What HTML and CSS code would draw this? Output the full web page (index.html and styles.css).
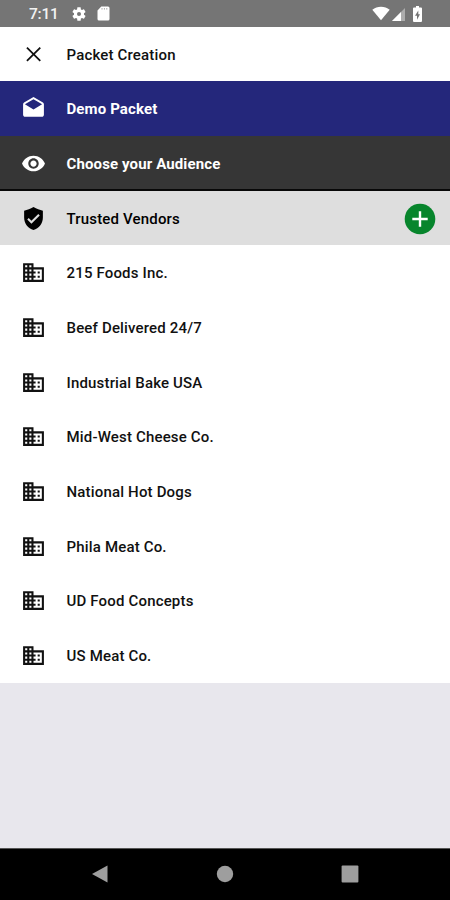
FILE: index.html
```html
<!DOCTYPE html>
<html lang="en">
<head>
<meta charset="utf-8">
<title>Packet Creation</title>
<link rel="stylesheet" href="styles.css">
</head>
<body>
<svg class="defs" aria-hidden="true">
  <symbol id="business" viewBox="0 0 24 24"><path d="M12 7V3H2v18h20V7H12zM6 19H4v-2h2v2zm0-4H4v-2h2v2zm0-4H4V9h2v2zm0-4H4V5h2v2zm4 12H8v-2h2v2zm0-4H8v-2h2v2zm0-4H8V9h2v2zm0-4H8V5h2v2zm10 12h-8v-2h2v-2h-2v-2h2v-2h-2V9h8v10zm-2-8h-2v2h2v-2zm0 4h-2v2h2v-2z"/></symbol>
</svg>
<div class="screen">
  <header class="status">
    <span class="time">7:11</span>
    <svg class="gear" viewBox="0 0 24 24"><path d="M19.43 12.98c.04-.32.07-.64.07-.98s-.03-.66-.07-.98l2.11-1.65c.19-.15.24-.42.12-.64l-2-3.46c-.12-.22-.39-.3-.61-.22l-2.49 1c-.52-.4-1.08-.73-1.69-.98l-.38-2.65C14.46 2.18 14.25 2 14 2h-4c-.25 0-.46.18-.49.42l-.38 2.65c-.61.25-1.17.59-1.69.98l-2.49-1c-.23-.09-.49 0-.61.22l-2 3.46c-.13.22-.07.49.12.64l2.11 1.65c-.04.32-.07.65-.07.98s.03.66.07.98l-2.11 1.65c-.19.15-.24.42-.12.64l2 3.46c.12.22.39.3.61.22l2.49-1c.52.4 1.08.73 1.69.98l.38 2.65c.03.24.24.42.49.42h4c.25 0 .46-.18.49-.42l.38-2.65c.61-.25 1.17-.59 1.69-.98l2.49 1c.23.09.49 0 .61-.22l2-3.46c.12-.22.07-.49-.12-.64l-2.11-1.65zM12 15a3 3 0 1 1 0-6 3 3 0 0 1 0 6z"/></svg>
    <svg class="card" viewBox="0 0 13 15"><path d="M4.3.5H11a1.5 1.5 0 0 1 1.5 1.5v11a1.5 1.5 0 0 1-1.5 1.5H2A1.5 1.5 0 0 1 .5 13V4.5z"/><path class="slots" d="M5 2v1.6M7.4 2v1.6M9.8 2v1.6"/></svg>
    <span class="spacer"></span>
    <svg class="wifi" viewBox="0 0 18 14"><path d="M9 13.7.3 3.3C2.8 1.3 5.8.3 9 .3s6.2 1 8.7 3z"/></svg>
    <svg class="signal" viewBox="0 0 13 13"><path class="dim" d="M13 0v13H0z"/><path d="M9 4v9H0z"/></svg>
    <svg class="battery" viewBox="0 0 9 16"><path fill-rule="evenodd" d="M3 0h3v1.6h2q1 0 1 1V15q0 1-1 1H1q-1 0-1-1V2.600q0-1 1-1h2zM5.300 4.500 2 9.700h2v4L7 8.300H5.300z"/></svg>
  </header>
  <main>
    <div class="row title"><svg class="icon close" viewBox="0 0 24 24"><path d="m5.700 5.400 12.800 12.800M18.500 5.400 5.700 18.200"/></svg><span class="label">Packet Creation</span></div>
    <div class="row packet"><svg class="icon" viewBox="0 0 24 24"><path d="M21.990 8c0-.72-.37-1.350-.94-1.700L12 1 2.950 6.300C2.380 6.650 2 7.280 2 8v10c0 1.100.9 2 2 2h16c1.100 0 2-.9 2-2l-.01-10zM12 13 3.740 7.840 12 3l8.260 4.840L12 13z"/></svg><span class="label">Demo Packet</span></div>
    <div class="row audience"><svg class="icon" viewBox="0 0 24 24"><path d="M12 4.500C7 4.500 2.730 7.610 1 12c1.730 4.390 6 7.500 11 7.500s9.270-3.110 11-7.500c-1.730-4.390-6-7.500-11-7.500zM12 17c-2.760 0-5-2.240-5-5s2.240-5 5-5 5 2.240 5 5-2.240 5-5 5zm0-8c-1.660 0-3 1.340-3 3s1.340 3 3 3 3-1.340 3-3-1.340-3-3-3z"/></svg><span class="label">Choose your Audience</span></div>
    <div class="row trusted"><svg class="icon" viewBox="0 0 24 24"><path d="M12 1C9 2.700 6 3.900 3 4.500V11c0 5.550 3.840 10.740 9 12 5.160-1.260 9-6.450 9-12V4.500C18 3.900 15 2.700 12 1zm-2 16-4-4 1.410-1.410L10 14.170l6.590-6.590L18 9l-8 8z"/></svg><span class="label">Trusted Vendors</span><svg class="add" viewBox="0 0 32 32"><circle cx="16" cy="16" r="15.300"/><path d="M16 8.300v15.400M8.300 16h15.400"/></svg></div>
    <div class="row"><svg class="icon"><use href="#business"/></svg><span class="label">215 Foods Inc.</span></div>
    <div class="row"><svg class="icon"><use href="#business"/></svg><span class="label">Beef Delivered 24/7</span></div>
    <div class="row"><svg class="icon"><use href="#business"/></svg><span class="label">Industrial Bake USA</span></div>
    <div class="row"><svg class="icon"><use href="#business"/></svg><span class="label">Mid-West Cheese Co.</span></div>
    <div class="row"><svg class="icon"><use href="#business"/></svg><span class="label">National Hot Dogs</span></div>
    <div class="row"><svg class="icon"><use href="#business"/></svg><span class="label">Phila Meat Co.</span></div>
    <div class="row"><svg class="icon"><use href="#business"/></svg><span class="label">UD Food Concepts</span></div>
    <div class="row"><svg class="icon"><use href="#business"/></svg><span class="label">US Meat Co.</span></div>
  </main>
  <nav class="nav">
    <svg viewBox="0 0 18 18"><path d="M16.500.5v17L1 9z"/></svg>
    <svg viewBox="0 0 18 18"><circle cx="9" cy="9" r="8.200"/></svg>
    <svg viewBox="0 0 18 18"><rect x=".6" y=".6" width="16.800" height="16.800" rx="1"/></svg>
  </nav>
</div>
</body>
</html>
```
FILE: styles.css
```css
* { box-sizing: border-box; }
body { margin: 0; font-family: Roboto, "Liberation Sans", sans-serif; }
svg { display: block; flex: none; fill: currentColor; }
.defs { width: 0; height: 0; position: absolute; }
.screen {
  display: flex;
  flex-direction: column;
  width: 450px;
  height: 900px;
  background: #e8e7ed;
}
.status {
  display: flex;
  align-items: center;
  height: 26.7px;
  padding: 1px 28px 0 29px;
  background: #757575;
  color: #fff;
}
.time { width: 42px; font-size: 15.5px; font-weight: 500; line-height: 24px; padding-top: 1px; letter-spacing: -.2px; color: #f2f2f2; }
.gear { width: 16px; height: 16px; }
.card { width: 13px; height: 15px; margin-left: 10px; }
.slots { stroke: #aaa; stroke-width: 1; }
.spacer { flex: 1; }
.wifi { width: 18px; height: 15px; }
.signal { width: 13px; height: 13px; margin: 1px 8px 0 2px; }
.dim { opacity: .4; }
.battery { width: 9px; height: 16px; }
main { background: #fff; }
.row {
  display: flex;
  align-items: center;
  height: 54.7px;
  padding: 1px 14px 0 21px;
  color: #111;
  font-size: 15px;
  font-weight: 500;
  letter-spacing: .17px;
}
.icon { width: 25px; height: 25px; margin-right: 20.5px; }
.row .icon { margin-top: -1px; }
.label { flex: 1; white-space: nowrap; }
.close { fill: none; stroke: currentColor; stroke-width: 1.7; }
.packet { background: #24277b; }
.audience { background: #363636; box-shadow: inset 0 -2px #080808; }
.packet, .audience { color: #fff; font-weight: 700; letter-spacing: .12px; }
.trusted { background: #dedede; color: #000; }
.add { width: 32px; height: 32px; color: #07852c; }
.add path { stroke: #fff; stroke-width: 2.4; }
.nav {
  display: flex;
  justify-content: space-between;
  align-items: center;
  height: 52px;
  margin-top: auto;
  padding: 0 91px 2px;
  background: #000;
  border-top: 1px solid #555;
  color: #9e9e9e;
}
.nav svg { width: 18px; height: 18px; }
```
